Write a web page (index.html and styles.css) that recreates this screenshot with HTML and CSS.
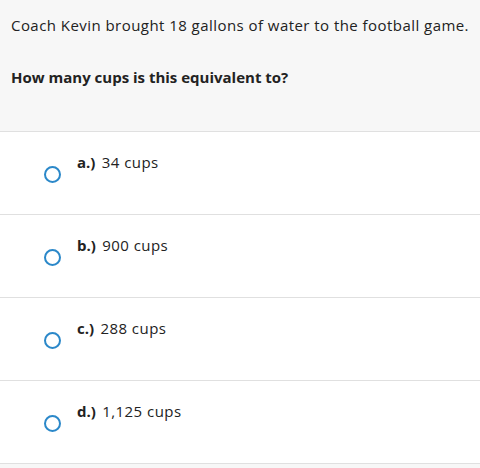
FILE: index.html
```html
<!DOCTYPE html>
<html>
<head>
<meta charset="utf-8">
<link rel="stylesheet" href="styles.css">
</head>
<body>
<div class="page">
  <div class="prompt">
    <p class="stem">Coach Kevin brought 18 gallons of water to the football game.</p>
    <p class="question">How many cups is this equivalent to?</p>
  </div>
  <ul class="choices">
    <li class="choice"><span class="radio"></span><span class="label"><b>a.)</b> 34 cups</span></li>
    <li class="choice"><span class="radio"></span><span class="label"><b>b.)</b> 900 cups</span></li>
    <li class="choice"><span class="radio"></span><span class="label"><b>c.)</b> 288 cups</span></li>
    <li class="choice"><span class="radio"></span><span class="label"><b>d.)</b> 1,125 cups</span></li>
  </ul>
</div>
</body>
</html>
```

FILE: styles.css
```css
html, body {
  margin: 0;
  padding: 0;
  background: #f7f7f7;
}
body {
  font-family: "Open Sans", "Liberation Sans", sans-serif;
  color: #222;
  font-size: 15px;
}
.page {
  width: 480px;
}
.prompt {
  background: #f7f7f7;
  padding: 15px 11px 0 11px;
  height: 116px;
  border-bottom: 1px solid #e0e0e0;
}
.prompt p {
  margin: 0;
  line-height: 20px;
}
.stem {
  font-size: 15px;
  letter-spacing: 0.45px;
}
.question {
  margin-top: 32px !important;
  font-weight: 700;
}
.choices {
  list-style: none;
  margin: 0;
  padding: 0;
  background: #fff;
}
.choice {
  height: 82px;
  border-bottom: 1px solid #e0e0e0;
  display: flex;
  align-items: flex-start;
  box-sizing: content-box;
}
.radio {
  width: 13px;
  height: 13px;
  border: 2px solid #2b88c9;
  border-radius: 50%;
  margin: 34px 0 0 44px;
  flex: none;
}
.label {
  margin: 20px 0 0 16px;
  line-height: 20px;
  letter-spacing: 0.45px;
}
.label b {
  font-weight: 700;
  letter-spacing: 0;
  margin-right: 2px;
}
```
